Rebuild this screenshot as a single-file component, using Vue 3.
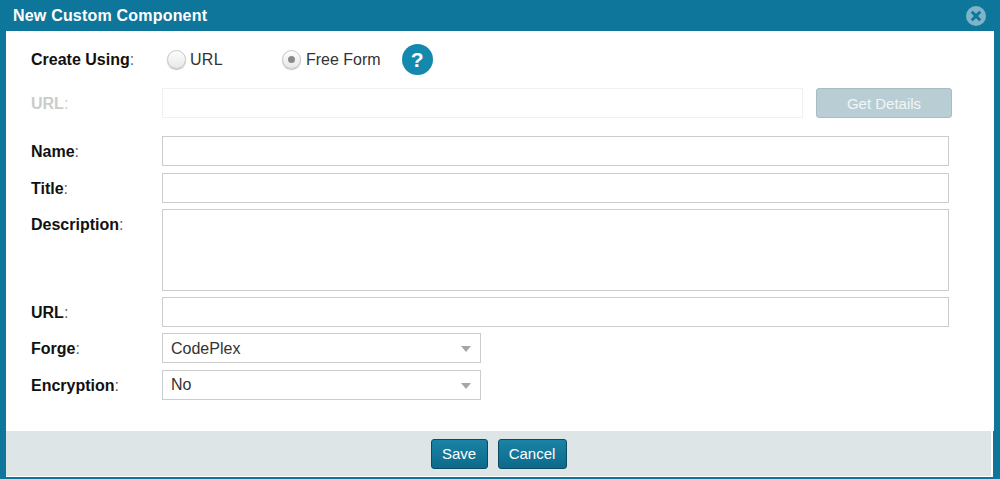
<script setup>
const textRows = [
  { label: 'Name', cls: 'r-name' },
  { label: 'Title', cls: 'r-title' }
]
</script>

<template>
  <div class="dialog">
    <header class="titlebar">
      <h1 class="title">New Custom Component</h1>
      <button class="close" type="button" aria-label="Close">
        <svg viewBox="0 0 20 20" width="20" height="20">
          <circle cx="10" cy="10" r="10" fill="#7db4c8" />
          <path d="M5.8 5.8 14.2 14.2M14.2 5.8 5.8 14.2" stroke="#0f769b" stroke-width="3" stroke-linecap="butt" />
        </svg>
      </button>
    </header>

    <div class="body">
      <div class="row using">
        <span class="label"><b>Create Using</b>:</span>
        <span class="radio first"></span>
        <span class="radio-text url-text">URL</span>
        <span class="radio checked"></span>
        <span class="radio-text">Free Form</span>
        <span class="help">?</span>
      </div>

      <div class="row fetch">
        <span class="label muted"><b>URL</b>:</span>
        <span class="input fetch-input"></span>
        <button class="details" type="button">Get Details</button>
      </div>

      <div v-for="r in textRows" :key="r.label" class="row" :class="r.cls">
        <span class="label"><b>{{ r.label }}</b>:</span>
        <span class="input wide"></span>
      </div>

      <div class="row r-desc">
        <span class="label top"><b>Description</b>:</span>
        <span class="input wide tall"></span>
      </div>

      <div class="row r-url">
        <span class="label"><b>URL</b>:</span>
        <span class="input wide"></span>
      </div>

      <div class="row r-forge">
        <span class="label"><b>Forge</b>:</span>
        <span class="input select">CodePlex<i class="caret"></i></span>
      </div>

      <div class="row r-enc">
        <span class="label"><b>Encryption</b>:</span>
        <span class="input select">No<i class="caret"></i></span>
      </div>
    </div>

    <footer class="footer">
      <button class="action save" type="button">Save</button>
      <button class="action cancel" type="button">Cancel</button>
    </footer>
  </div>
</template>

<style>
html, body { margin: 0; padding: 0; background: #0f769b; }
</style>

<style scoped>
.dialog {
  width: 1000px;
  height: 479px;
  box-sizing: border-box;
  display: flex;
  flex-direction: column;
  background: #0f769b;
  padding: 0 6px 2px;
  font-family: "Liberation Sans", Arial, sans-serif;
  font-size: 16px;
  color: #222;
  overflow: hidden;
}
.titlebar {
  height: 31px;
  flex: none;
  display: flex;
  align-items: center;
  justify-content: space-between;
  padding: 0 0 0 7px;
  margin-right: -6px;
}
.title {
  margin: 0;
  font-size: 16px;
  font-weight: 700;
  letter-spacing: 0.2px;
  color: #fff;
}
.close {
  border: 0;
  padding: 0;
  background: none;
  width: 20px;
  height: 20px;
  margin-right: 14px;
}
.close svg { display: block; }
.body {
  flex: 1;
  background: #fff;
  padding: 13px 0 0 25px;
  box-sizing: border-box;
}
.row {
  display: flex;
  align-items: center;
  height: 30px;
}
.label {
  width: 131px;
  flex: none;
  padding-top: 2px;
  color: #666;
}
.label b { color: #111; }
.label.muted, .label.muted b { color: #ccc; }
.using { height: 31px; }
.using .label { width: 136px; padding-top: 0; }
.radio {
  width: 19px;
  height: 19px;
  box-sizing: border-box;
  flex: none;
  border: 1px solid #c8c8c8;
  border-radius: 50%;
  background: linear-gradient(#fdfdfd, #e8e8e8);
  box-shadow: 0 1px 1px #bbb;
  position: relative;
}
.radio.checked::after {
  content: "";
  position: absolute;
  left: 5px;
  top: 5px;
  width: 7px;
  height: 7px;
  border-radius: 50%;
  background: #8a8a8a;
}
.radio-text { margin-left: 4px; color: #333; }
.url-text { width: 92px; letter-spacing: 0.3px; }
.checked + .radio-text { margin-left: 5px; }
.help {
  width: 31px;
  height: 31px;
  margin-left: 21px;
  border-radius: 50%;
  background: #1489ae;
  color: #fff;
  font-size: 21px;
  font-weight: 700;
  display: flex;
  align-items: center;
  justify-content: center;
}
.fetch { margin-top: 13px; }
.input {
  display: block;
  height: 30px;
  box-sizing: border-box;
  border: 1px solid #ccc;
  background: #fff;
  flex: none;
}
.fetch-input {
  width: 641px;
  border-color: #f0f0f0;
}
.details {
  width: 136px;
  height: 30px;
  margin-left: 13px;
  box-sizing: border-box;
  border: 1px solid #a9bcc1;
  border-radius: 3px;
  background: #b9ced4;
  color: #f2f6f7;
  font: 15px "Liberation Sans", Arial, sans-serif;
}
.wide { width: 787px; }
.r-name { margin-top: 18px; }
.r-title { margin-top: 7px; }
.r-desc {
  margin-top: 6px;
  height: 82px;
  align-items: flex-start;
}
.tall { height: 82px; }
.label.top { padding-top: 7px; }
.r-url { margin-top: 6px; }
.r-forge { margin-top: 6px; }
.r-enc { margin-top: 7px; }
.select {
  width: 319px;
  padding-left: 8px;
  line-height: 30px;
  color: #333;
  position: relative;
}
.r-enc .select { line-height: 28px; }
.caret {
  position: absolute;
  right: 9px;
  top: 12px;
  width: 0;
  height: 0;
  border-left: 5px solid transparent;
  border-right: 5px solid transparent;
  border-top: 6px solid #a6a6a6;
}
.footer {
  height: 45px;
  flex: none;
  margin-right: 3px;
  background: #dee5e7;
  display: flex;
  align-items: center;
  justify-content: center;
  gap: 10px;
  border-bottom: 1px solid #fff;
  box-shadow: 2px 0 0 #fff;
  box-sizing: content-box;
}
.action {
  height: 30px;
  box-sizing: border-box;
  border: 1px solid #0b4a60;
  border-radius: 3px;
  background: linear-gradient(#1a83a6, #0d6a8b);
  color: #fff;
  font: 15px "Liberation Sans", Arial, sans-serif;
  padding: 0;
}
.save { width: 57px; }
.cancel { width: 69px; }
</style>
